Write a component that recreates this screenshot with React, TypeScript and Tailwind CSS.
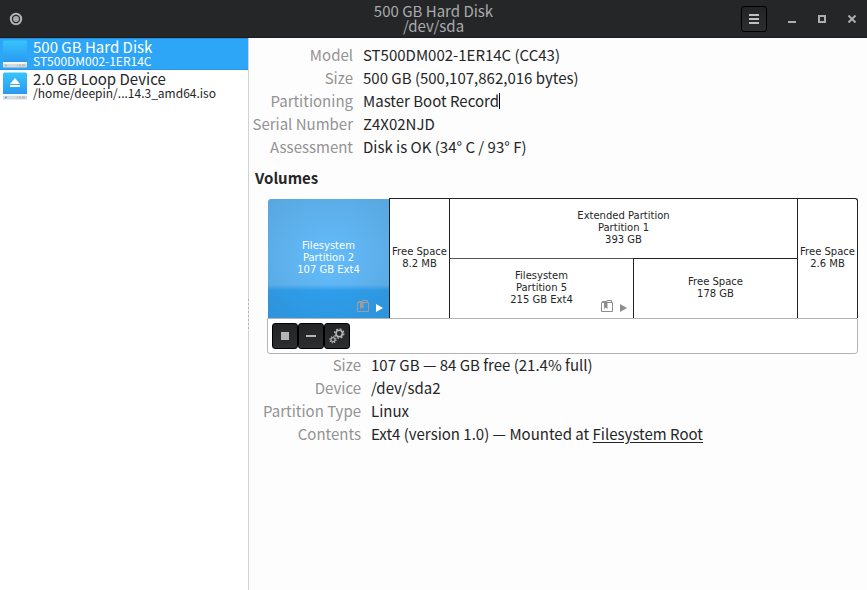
import React from "react";

const FONT = "font-['Noto_Sans_CJK_SC',sans-serif]";

function DriveIcon({ eject = false }: { eject?: boolean }) {
  const id = eject ? "drive-eject" : "drive-disk";
  return (
    <svg width="24" height="28" viewBox="0 0 24 28" aria-hidden="true" className="shrink-0">
      <defs>
        <linearGradient id={id} x1="0" y1="0" x2="0" y2="1">
          <stop offset="0" stopColor="#38c4fb" />
          <stop offset="1" stopColor="#2795f2" />
        </linearGradient>
      </defs>
      <rect x="0" y="0.500" width="24" height="24" rx="1.500" fill={`url(#${id})`} />
      <path d="M0 22h24v4.500a1 1 0 0 1-1 1H1a1 1 0 0 1-1-1z" fill="#d5dadd" />
      <path d="M0 22h24v2H0z" fill="#f5f7f8" />
      <rect x="2" y="24.500" width="2" height="2" rx="1" fill={eject ? "#35b1f5" : "#a9b0b4"} />
      <path d="M14 24.500h8v2h-8z" fill="#b5babd" />
      <path d="M15.500 24.500v2M18.500 24.500v2" stroke="#dfe3e5" />
      {eject && <path d="M12 6l5 6H7zM7 13h10v2H7z" fill="#fff" />}
    </svg>
  );
}

function MountedMarks({ folder, arrow }: { folder: string; arrow: string }) {
  return (
    <svg width="27" height="12" viewBox="0 0 27 12" aria-hidden="true" className="absolute right-[5px] bottom-[6px]">
      <path d="M.5 2.500h11v9H.5zM1.500 2.500V1.500h4.500M6 1.500V.5h4.500v2" fill="none" stroke={folder} />
      <path d="M3 3h3.500v6L4.750 7.500 3 9z" fill={folder} />
      <path d="M19 4v8l7-4z" fill={arrow} />
    </svg>
  );
}

type SegmentProps = { lines: string[]; className: string; children?: React.ReactNode };

function Segment({ lines, className, children }: SegmentProps) {
  return (
    <button
      type="button"
      className={`relative flex min-w-0 flex-col items-center justify-center pb-0.5 whitespace-nowrap font-['DejaVu_Sans',sans-serif] text-[10px] leading-3 ${className}`}
    >
      {lines.map((line) => (
        <span key={line}>{line}</span>
      ))}
      {children}
    </button>
  );
}

function Row({ label, children }: { label: string; children: React.ReactNode }) {
  return (
    <>
      <dt className="flex justify-end text-[#939393]">{label}</dt>
      <dd>{children}</dd>
    </>
  );
}

function Gears() {
  return (
    <svg width="16" height="16" viewBox="0 0 16 16" fill="none" stroke="#b4b5b6" aria-hidden="true">
      <circle cx="10.200" cy="5.500" r="3.200" strokeWidth="1.600" />
      <circle cx="10.200" cy="5.500" r="4.600" strokeWidth="1.400" strokeDasharray="1.806 1.806" />
      <circle cx="4" cy="11.700" r="2" strokeWidth="1.200" />
      <circle cx="4" cy="11.700" r="3.100" strokeWidth="1.200" strokeDasharray="1.217 1.217" />
    </svg>
  );
}

const toolButton =
  "flex size-[26px] items-center justify-center rounded-[3px] border border-black bg-linear-to-b from-[#222426] to-[#2c2d2f]";

const devices = [
  { name: "500 GB Hard Disk", detail: "ST500DM002-1ER14C", selected: true },
  { name: "2.0 GB Loop Device", detail: "/home/deepin/...14.3_amd64.iso", selected: false },
];

export default function App() {
  return (
    <div className={`flex min-h-screen flex-col bg-[#fdfdfd] text-[15px] text-[#252627] ${FONT}`}>
      <header className="grid h-[38px] grid-cols-[1fr_auto_1fr] items-center border-b border-[#1a1b1c] bg-[#252628] text-[#aaabac]">
        <svg width="14" height="14" viewBox="0 0 14 14" aria-hidden="true" className="ml-[9px]">
          <circle cx="7" cy="7" r="5.200" fill="none" stroke="#b4b4b4" strokeWidth="2" />
          <circle cx="7" cy="7" r="3" fill="#a8a8a8" />
        </svg>
        <h1 className="pb-0.5 text-center leading-[15px]">
          500 GB Hard Disk
          <br />
          /dev/sda
        </h1>
        <div className="flex items-center justify-end">
          <button type="button" aria-label="Menu" className={`mr-[10px] ${toolButton}`}>
            <svg width="10" height="10" viewBox="0 0 10 10" aria-hidden="true">
              <path d="M0 0h10v2H0zM0 4h10v2H0zM0 8h10v2H0z" fill="#c0c0c0" />
            </svg>
          </button>
          <button type="button" aria-label="Minimize" className="flex w-[30px] justify-center">
            <svg width="8" height="8" viewBox="0 0 8 8" aria-hidden="true">
              <path d="M0 6h8v2H0z" fill="#adadad" />
            </svg>
          </button>
          <button type="button" aria-label="Maximize" className="flex w-[30px] justify-center">
            <svg width="8" height="8" viewBox="0 0 8 8" aria-hidden="true">
              <path d="M1 1h6v6H1z" fill="none" stroke="#adadad" strokeWidth="2" />
            </svg>
          </button>
          <button type="button" aria-label="Close" className="flex w-[30px] justify-center">
            <svg width="8" height="8" viewBox="0 0 8 8" aria-hidden="true">
              <path d="M.5.5l7 7M7.500.5l-7 7" stroke="#adadad" strokeWidth="2" />
            </svg>
          </button>
        </div>
      </header>

      <div className="flex grow">
        <nav aria-label="Devices" className="w-[248px] shrink-0 bg-white">
          {devices.map((device) => (
            <button
              key={device.name}
              type="button"
              className={`flex h-8 w-full items-center gap-[6px] border-y pl-[3px] text-left ${
                device.selected ? "border-t-[#2390e0] border-b-[#2b95e6] bg-[#2ea6f8] text-white" : "border-white"
              }`}
            >
              <DriveIcon eject={!device.selected} />
              <span className="flex min-w-0 flex-col pb-0.5 whitespace-nowrap">
                <span className="leading-4">{device.name}</span>
                <span className="text-[12px] leading-3">{device.detail}</span>
              </span>
            </button>
          ))}
        </nav>
        <div className="flex w-px shrink-0 flex-col bg-[#d2d2d2] pt-[261px]">
          <div className="h-8 bg-[repeating-linear-gradient(#b0b0b0_0_2px,#e4e4e4_2px_4px)]" />
        </div>

        <main className="min-w-0 grow pt-[5px] pr-[9px] pl-[6px]">
          <dl className="grid grid-cols-[98px_1fr] gap-x-[10px] leading-[23px] whitespace-nowrap">
            <Row label="Model">ST500DM002-1ER14C (CC43)</Row>
            <Row label="Size">500 GB (500,107,862,016 bytes)</Row>
            <Row label="Partitioning">
              <span className="inline-block h-4 border-r border-black leading-4">Master Boot Record</span>
            </Row>
            <Row label="Serial Number">Z4X02NJD</Row>
            <Row label="Assessment">Disk is OK (34° C / 93° F)</Row>
          </dl>
          <h2 className="pt-2 pb-px leading-[23px] font-bold">Volumes</h2>

          <section aria-label="Volumes" className="mt-2 ml-3">
            <div className="grid h-[120px] grid-cols-[122fr_60px_348fr_61px] bg-white">
              <Segment
                lines={["Filesystem", "Partition 2", "107 GB Ext4"]}
                className="mt-px ml-px rounded-tl-[3px] bg-[radial-gradient(ellipse_at_center,rgba(255,255,255,0.03)_20%,rgba(70,110,140,0.25)_110%),linear-gradient(#5cb6f6_0_72%,#279df0_77%)] text-white"
              >
                <MountedMarks folder="#a59b98" arrow="#fff" />
              </Segment>
              <Segment lines={["Free Space", "8.2 MB"]} className="border-t border-l border-[#222]" />
              <div className="grid grid-cols-[184fr_164fr] grid-rows-[60px_60px]">
                <Segment
                  lines={["Extended Partition", "Partition 1", "393 GB"]}
                  className="col-span-2 border-t border-l border-[#222]"
                />
                <Segment
                  lines={["Filesystem", "Partition 5", "215 GB Ext4"]}
                  className="border-t border-l border-t-[#555] border-l-[#222]"
                >
                  <MountedMarks folder="#8d8d8d" arrow="#8d8d8d" />
                </Segment>
                <Segment lines={["Free Space", "178 GB"]} className="border-t border-l border-[#222]" />
              </div>
              <Segment
                lines={["Free Space", "2.6 MB"]}
                className="rounded-tr-[3px] border-x border-t border-[#222]"
              />
            </div>
            <div role="toolbar" aria-label="Volume actions" className="flex h-9 rounded-b-[3px] border border-[#b4b4b4] bg-white p-1">
              <button type="button" aria-label="Unmount" className={toolButton}>
                <svg width="8" height="8" viewBox="0 0 8 8" aria-hidden="true">
                  <path d="M0 0h8v8H0z" fill="#b4b4b4" />
                </svg>
              </button>
              <button type="button" aria-label="Delete partition" className={toolButton}>
                <svg width="10" height="2" viewBox="0 0 10 2" aria-hidden="true">
                  <path d="M0 0h10v2H0z" fill="#b4b4b4" />
                </svg>
              </button>
              <button type="button" aria-label="Partition options" className={toolButton}>
                <Gears />
              </button>
            </div>
            <dl className="-mt-px grid grid-cols-[94px_1fr] gap-x-[10px] leading-[23px] whitespace-nowrap">
              <Row label="Size">107 GB — 84 GB free (21.4% full)</Row>
              <Row label="Device">/dev/sda2</Row>
              <Row label="Partition Type">Linux</Row>
              <Row label="Contents">
                Ext4 (version 1.0) — Mounted at{" "}
                <a href="#root" className="underline underline-offset-2">
                  Filesystem Root
                </a>
              </Row>
            </dl>
          </section>
        </main>
      </div>
    </div>
  );
}
